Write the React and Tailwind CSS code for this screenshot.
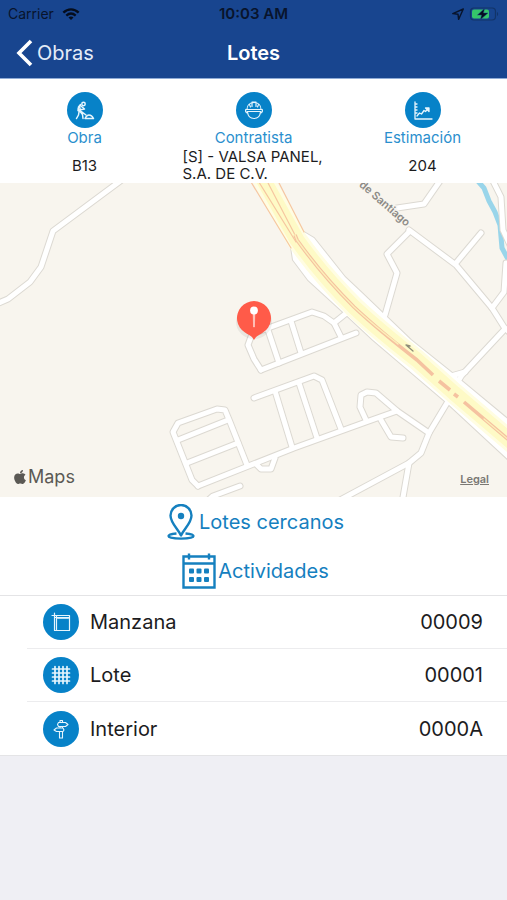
import React from 'react';
import { FaApple } from 'react-icons/fa';

const roads = [
  'M123 -4 L53 48 L41 84 L30 99 L8 116 L-6 122',
  'M442 -5 L424 21 L397 25',
  'M409 47 L456 82 L492 125 L504 144 L514 154',
  'M409 49 L387 71 L397 90 L385 132',
  'M456 80 L481 50',
  'M492 125 L504 109 L506 80',
  'M492 -4 L501 14 L503 47 L510 62',
  'M504 147 L462 192 L457 200',
  'M451 193 L465 189',
  'M261 187 L254 176 L248 162 L252 151 L271 144 L312 129 L324 133 L334 140 L341 154',
  'M334 140 L349 128',
  'M261 187 L356 150',
  'M268 147 L279 180',
  'M291 138 L301 170',
  'M254 215 L314 193 L322 197 L341 246',
  'M275 208 L292 264',
  'M299 200 L317 255',
  'M198 303 L294 265 L366 239 L397 228',
  'M198 303 L192 297 L173 249 L178 240 L217 226 L225 227 L230 239 L247 282',
  'M178 257 L228 237',
  'M187 280 L238 260',
  'M256 281 L261 286 L271 286 L275 275',
  'M240 303 L213 313 L205 320',
  'M366 237 L360 224 L361 212 L367 209 L376 210 L397 228 L429 250',
  'M381 237 L391 254 L403 255',
  'M450 215 L429 250 L421 270 L409 280 L340 317',
  'M409 280 L402 320',
];

const highway = 'M262 -6 L297 57 C312 78 336 106 354 124 C370 139 390 156 417 177 L454 210 L515 262';
const shoulder = 'M291 64 L293 77 L308 97 L343 129 L373 157 L447 220 L515 283 V242 L451 189 L411 157 L362 110 L345 94 L314 55 L304 49 Z';

const summary = [
  { label: 'Obra', value: 'B13', icon: WorkerIcon },
  { label: 'Contratista', value: '[S] - VALSA PANEL, S.A. DE C.V.', icon: HelmetIcon },
  { label: 'Estimación', value: '204', icon: ChartIcon },
];

const details = [
  { label: 'Manzana', value: '00009', icon: BlockIcon },
  { label: 'Lote', value: '00001', icon: GridIcon },
  { label: 'Interior', value: '0000A', icon: SignIcon },
];

function Glyph({ children, width = 1.3 }) {
  return (
    <svg viewBox="0 0 36 36" className="size-9" fill="none" stroke="#e6f5fd" strokeWidth={width} strokeLinecap="round" strokeLinejoin="round" aria-hidden="true">
      {children}
    </svg>
  );
}

function WorkerIcon() {
  return (
    <Glyph width={1.5}>
      <circle cx="16.5" cy="12" r="1.7" />
      <path d="M13.5 12.5 L11.5 15 L11 18.5 L13 19.5 M14 14 L17.5 17 L14.500 17.500 M12.500 14.500 L13.500 18.500 M12 20 L11.5 23 L9.5 26.5 M13.5 20 L15.5 22.5 L16 26.5 M11 17 L19 23" />
      <path d="M18 26.5 C19 24.5 20.5 23 22 23 C24 23 25.5 24.5 26.5 26.5 Z" />
    </Glyph>
  );
}

function HelmetIcon() {
  return (
    <Glyph width={1.2}>
      <path d="M11 17.5 C11 13 14 10.5 18 10.5 C22 10.5 25 13 25 17.5 M16 10.5 V14.5 M20 10.5 V14.5 M16 10 H20 M13.5 12.5 L14.5 15 M22.5 12.5 L21.5 15" />
      <path d="M10 17.5 H26 M11 19.500 H25" />
      <path d="M11.5 20 C12 24.5 15 26.5 18 26.5 C21 26.5 24 24.5 24.5 20 M10 17.500 C9 19 10 21 11.5 21 M26 17.500 C27 19 26 21 24.5 21" />
    </Glyph>
  );
}

function ChartIcon() {
  return (
    <Glyph>
      <path d="M10 10 V27 H27 M10 12 H12 M10 15 H12 M10 18 H12 M10 21 H12" />
      <path d="M12 24 L14.5 21 L16.5 22 L19 18.5 L20.5 19.5 L23.5 16.5" />
      <path d="M20.5 16 H24 V19.5 Z" fill="#e6f5fd" />
    </Glyph>
  );
}

function BlockIcon() {
  return (
    <Glyph width={1.2}>
      <path d="M9 11.5 H26.5 M11.5 9 V26.5 M11.5 13.5 H26.5 M13.5 11.5 V26.5 H26.5 V11.5 M11.500 26.500 H13.500" />
      <path d="M14.500 14.500 H25.500" strokeWidth="0.8" />
    </Glyph>
  );
}

function GridIcon() {
  return (
    <Glyph width={1.7}>
      <path d="M12 9.5 V26.5 M16 9.5 V26.5 M20 9.5 V26.5 M24 9.5 V26.5 M9.5 12 H26.5 M9.5 16 H26.5 M9.5 20 H26.5 M9.5 24 H26.5" />
    </Glyph>
  );
}

function SignIcon() {
  return (
    <Glyph width={1.1}>
      <path d="M15.5 11.5 H22.5 L25 13.5 L22.5 15.5 H15.5 L14.5 13.5 Z M17 11 V9.5 H19.5 V11" />
      <path d="M20 17 H13.5 L11 19 L13.5 20.5 H20 L21 19 Z M17 15.5 V17 M19.5 15.5 V17 M16.5 20.5 V27 H19.5 V20.5" />
    </Glyph>
  );
}

function Badge({ icon: Icon }) {
  return (
    <span className="flex size-9 shrink-0 items-center justify-center rounded-full bg-[#0782c8]">
      <Icon />
    </span>
  );
}

function StatusBar() {
  return (
    <div className="grid h-7 grid-cols-3 items-center px-2 text-sm text-[#08142c]">
      <div className="flex items-center gap-2">
        <span>Carrier</span>
        <svg viewBox="0 0 20 14" className="h-[14px] w-[18px]" fill="none" stroke="#050d1d" strokeWidth="2.6" aria-hidden="true">
          <path d="M1.5 5.5 C6.5 0.6 13.5 0.6 18.5 5.5" />
          <path d="M4.8 8.8 C8 5.9 12 5.9 15.2 8.8" />
          <path d="M10 13.6 L7.2 10.8 C8.8 9.4 11.2 9.4 12.8 10.8 Z" fill="#050d1d" stroke="none" />
        </svg>
      </div>
      <span className="text-center text-[15px] font-semibold">10:03 AM</span>
      <div className="flex items-center justify-end gap-1">
        <svg viewBox="0 0 14 14" className="size-[14px]" fill="none" stroke="#08142c" strokeWidth="1.4" strokeLinejoin="round" aria-hidden="true">
          <path d="M12.3 2 L1.8 6.6 L7 7.2 L7.6 12.4 Z" />
        </svg>
        <svg viewBox="0 0 30 14" className="h-[14px] w-[30px]" aria-hidden="true">
          <rect x="1.5" y="1" width="25" height="12" rx="3.5" fill="none" stroke="#123468" strokeWidth="1.2" />
          <rect x="3" y="2.5" width="17" height="9" rx="2" fill="#35c76a" />
          <path d="M28 5 C29.5 5.5 29.5 8.5 28 9 Z" fill="#123468" />
          <path d="M15.5 1.5 L8.5 8 H12.5 L11.5 12.5 L19 6 H14.5 Z" fill="#050d1d" stroke="#18458f" strokeWidth="0.5" />
        </svg>
      </div>
    </div>
  );
}

function Map() {
  return (
    <section className="relative h-[314px] overflow-hidden bg-[#f8f5ee]">
      <svg viewBox="0 0 507 314" preserveAspectRatio="xMidYMid slice" className="block h-full w-full" role="img" aria-label="Maps">
        <path d="M476 -4 L484 5 L489 18 L495 29 L500 42 L502 65 L509 78" fill="none" stroke="#99d5ea" strokeWidth="5" />
        <g fill="none" strokeLinecap="round" strokeLinejoin="round">
          <g stroke="#dcd9d2" strokeWidth="7">
            {roads.map((d) => <path key={d} d={d} />)}
          </g>
          <path d={shoulder} stroke="#dcd9d2" strokeWidth="2" />
          <g stroke="#fff" strokeWidth="5">
            {roads.map((d) => <path key={d} d={d} />)}
          </g>
          <path d={shoulder} fill="#fff" />
          <path d={highway} stroke="#fffde2" strokeWidth="21" />
          <path d={highway} stroke="#fefac6" strokeWidth="15" />
          <g stroke="#f6c7a0" strokeWidth="1.2">
            <path d="M251 -1 L291 65" />
            <path d="M277 -4 L304 49" />
            <path d="M257 -4 L296 59" />
            <path d="M266 -4 L280 23 L294 50 L298 59" />
          </g>
          <path d="M295 52 L297 57 C312 78 336 106 354 124 C370 139 390 156 417 177 L433 192" stroke="#f5c2a0" strokeWidth="3.6" strokeLinecap="butt" />
          <path d="M295 52 L297 57 C312 78 336 106 354 124 C370 139 385 151 398 161" stroke="#fdf0b8" strokeWidth="1.4" />
          <path d="M439 198 L450 207 M454 211 L458 214 M464 219 L510 258" stroke="#f5c2a0" strokeWidth="3.6" strokeLinecap="butt" />
          <path d="M484 236 L510 258" stroke="#fdf0b8" strokeWidth="1.2" />
          <path d="M406 162 L413 168 M406 162 L410 163" stroke="#8e8c78" strokeWidth="1.3" />
        </g>
        <text
          transform="translate(406 44) rotate(41)"
          textAnchor="end"
          className="fill-[#8c8a86] stroke-[#f8f5ee] font-['Inter',sans-serif] text-[11px] font-semibold [paint-order:stroke]"
          strokeWidth="3"
        >
          de Santiago
        </text>
        <ellipse cx="254" cy="139" rx="18" ry="17" fill="#000" opacity="0.06" />
        <path d="M254 157 C252 153 249 152 245 149.500 A17 17 0 1 1 263 149.500 C259 152 256 153 254 157 Z" fill="#ff5b49" />
        <path d="M253.200 131 H254.800 L254.400 144 H253.600 Z" fill="#ffd6d0" stroke="#ffd6d0" strokeWidth="0.6" />
        <circle cx="254" cy="127.500" r="3.900" fill="#fff" />
      </svg>
      <div className="absolute inset-x-0 bottom-0 flex items-end justify-between py-2 pr-[18px] pl-3 text-[#5b5954]">
        <span className="flex items-center text-lg leading-6">
          <FaApple className="size-4" aria-hidden="true" />
          Maps
        </span>
        <a href="#legal" className="text-[11px] leading-5 font-semibold text-[#7b7974] underline">Legal</a>
      </div>
    </section>
  );
}

export default function App() {
  return (
    <div className="min-h-screen bg-[#efeff4] font-['Inter','Liberation_Sans',sans-serif] text-[#1c1c1e]">
      <header className="border-b border-[#8fabd6] bg-[#18458f]">
        <StatusBar />
        <nav className="grid h-[50px] grid-cols-3 items-center px-4 text-xl leading-6 text-white">
          <a href="#obras" className="flex items-center gap-1 text-[#e4ecf8]">
            <svg viewBox="0 0 17 28" className="h-7 w-[17px]" fill="none" stroke="#fff" strokeWidth="3.6" aria-hidden="true">
              <path d="M15 2 L3 14 L15 26" />
            </svg>
            Obras
          </a>
          <h1 className="text-center font-semibold">Lotes</h1>
        </nav>
      </header>

      <main className="bg-white">
        <section className="grid h-[104px] grid-cols-3 pt-[13px]">
          {summary.map((item) => (
            <div key={item.label} className="flex flex-col items-center">
              <Badge icon={item.icon} />
              <h2 className="text-[15px] leading-5 text-[#2a8fce]">{item.label}</h2>
              <div className="flex h-[34px] max-w-[142px] items-center">
                <p className="text-[15px] leading-[17px]">{item.value}</p>
              </div>
            </div>
          ))}
        </section>

        <Map />

        <section className="flex flex-col items-center border-b border-[#e4e4e6] text-xl text-[#1580bf]">
          <button type="button" className="flex h-[49px] items-center gap-1 pl-1">
            <svg viewBox="0 0 28 36" className="h-9 w-7" fill="none" stroke="#1580bf" strokeWidth="2.400" strokeLinejoin="round" aria-hidden="true">
              <path d="M14 31.500 C11 25 3.500 19 3.500 11.500 A10.500 10.500 0 0 1 24.500 11.500 C24.500 19 17 25 14 31.500 Z" />
              <circle cx="14" cy="12" r="3.200" fill="#1580bf" stroke="none" />
              <path d="M9.500 29.500 C4 30 1.500 30.800 1.500 32 C1.500 33.600 7 34.600 14 34.600 C21 34.600 26.500 33.600 26.500 32 C26.500 30.800 24 30 18.500 29.500" />
            </svg>
            Lotes cercanos
          </button>
          <button type="button" className="flex h-[49px] items-center gap-[2px] pl-1">
            <svg viewBox="0 0 34 36" className="h-9 w-[34px]" fill="none" stroke="#1580bf" strokeWidth="2.400" aria-hidden="true">
              <path d="M1.500 3.500 H32.500 V34.500 H1.500 Z M1.500 10.500 H32.500 M7 0.500 V6.500 M27 0.500 V6.500" />
              <g fill="#1580bf" stroke="none">
                <rect x="7" y="15.500" width="5" height="5" rx="1" />
                <rect x="14.500" y="15.500" width="5" height="5" rx="1" />
                <rect x="22" y="15.500" width="5" height="5" rx="1" />
                <rect x="7" y="24" width="5" height="5" rx="1" />
                <rect x="14.500" y="24" width="5" height="5" rx="1" />
                <rect x="22" y="24" width="5" height="5" rx="1" />
              </g>
            </svg>
            Actividades
          </button>
        </section>

        <ul className="border-b border-[#e4e4e6] pl-[27px]">
          {details.map((row) => (
            <li key={row.label} className="flex h-[53px] items-center border-b border-[#ececee] pr-6 pl-4 text-xl last:border-b-0">
              <Badge icon={row.icon} />
              <span className="ml-[11px]">{row.label}</span>
              <span className="ml-auto">{row.value}</span>
            </li>
          ))}
        </ul>
      </main>
    </div>
  );
}
